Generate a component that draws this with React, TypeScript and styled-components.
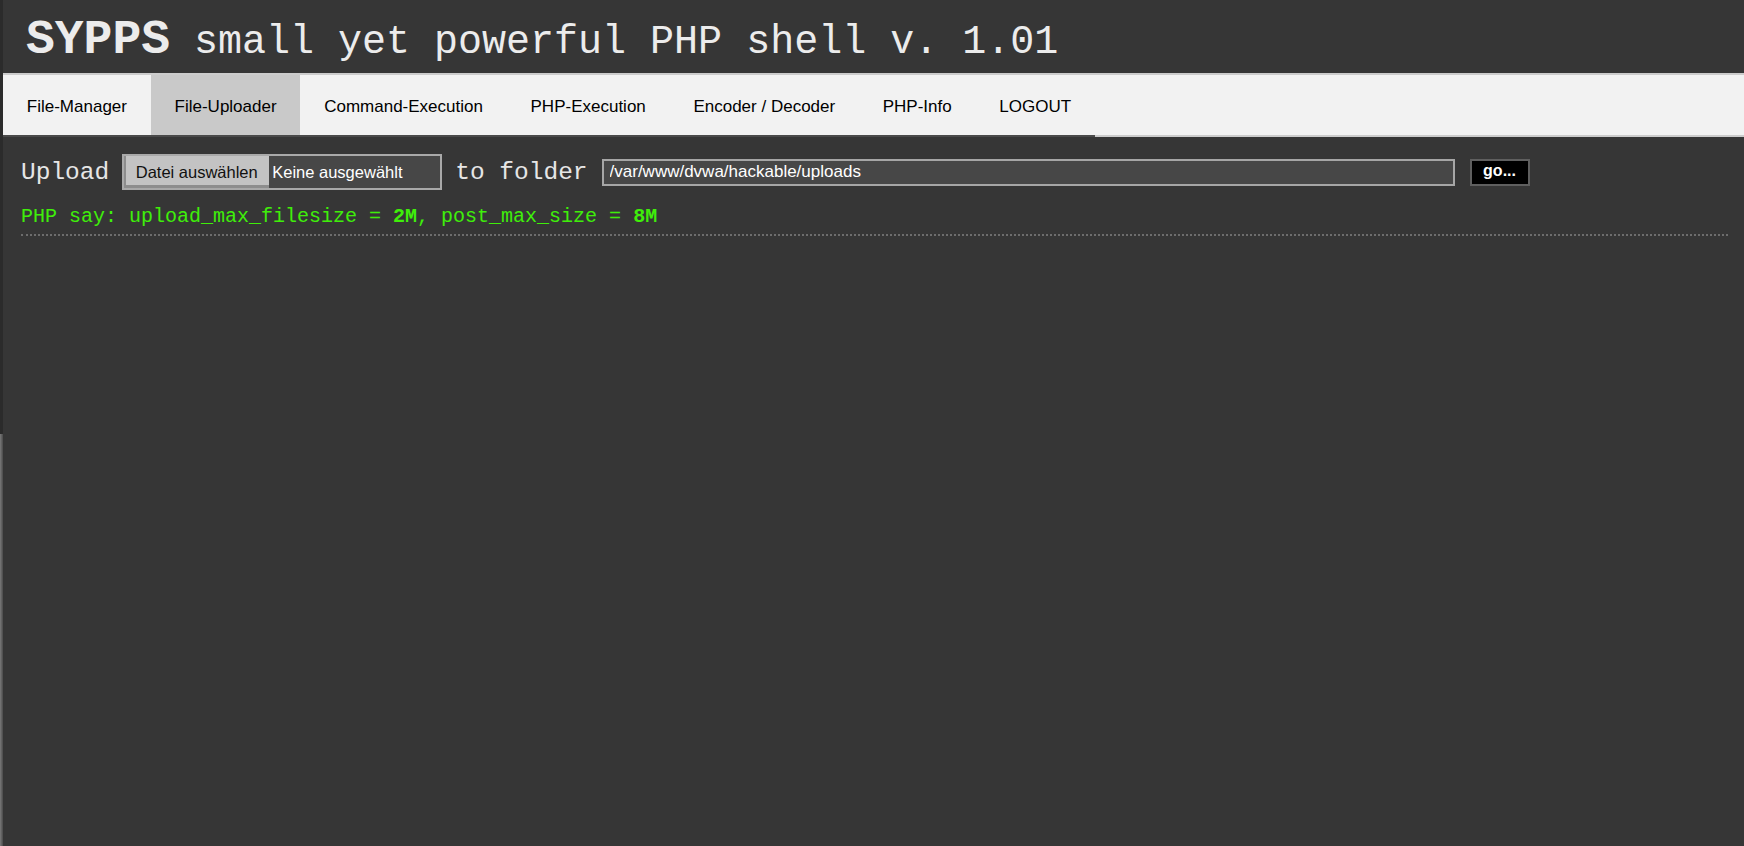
import React from "react";
import styled, { createGlobalStyle } from "styled-components";

const GlobalStyle = createGlobalStyle`
  html, body {
    margin: 0;
    padding: 0;
  }
  body {
    min-height: 846px;
    padding-left: 3px;
    background:
      linear-gradient(#2b2b2b, #2b2b2b) 0 0 / 3px 434px no-repeat,
      linear-gradient(to right, #7a7a7a, #4a4a4a) 0 434px / 3px 100% no-repeat,
      #363636;
    font-family: "Liberation Sans", Arial, sans-serif;
  }
`;

const Header = styled.header`
  height: 73px;
  display: flex;
  align-items: flex-start;
  padding-left: 23px;
  background: #363636;
`;

const Title = styled.h1`
  margin: 0;
  padding-top: 5px;
  line-height: 70px;
  font-family: "Liberation Mono", "Courier New", monospace;
  font-weight: normal;
  color: #ececec;
  white-space: pre;
`;

const Brand = styled.b`
  font-size: 48px;
  font-weight: bold;
`;

const Subtitle = styled.span`
  font-size: 40px;
`;

const Nav = styled.nav`
  display: flex;
  height: 60px;
  background: #f2f2f2;
  border-top: 2px solid #cccccc;
  border-bottom: 2px solid #cccccc;
`;

const Tabs = styled.ul`
  display: flex;
  margin: 0 0 -2px 0;
  padding: 0;
  list-style: none;
  border-bottom: 2px solid #4a4a4a;
`;

const Tab = styled.li<{ $active?: boolean }>`
  padding: 3px 23.8px 0 23.8px;
  line-height: 57px;
  font-size: 17px;
  color: #000;
  background: ${(p) => (p.$active ? "#c9c9c9" : "#f2f2f2")};
  cursor: pointer;
`;

const Content = styled.main`
  padding: 17px 16px 0 18px;
`;

const UploadRow = styled.form`
  display: flex;
  align-items: center;
  margin: 0;
`;

const Label = styled.span<{ $gap: number }>`
  font-family: "Liberation Mono", "Courier New", monospace;
  font-size: 24.5px;
  color: #e6e6e6;
  margin-right: ${(p) => p.$gap}px;
  white-space: pre;
`;

const FileBox = styled.label`
  display: flex;
  box-sizing: border-box;
  width: 320px;
  height: 36px;
  border: 2px solid #a9a9a9;
  background: #474747;
  margin-right: 13px;
`;

const FileButton = styled.span`
  display: flex;
  align-items: center;
  justify-content: center;
  width: 145px;
  background: #c3c3c3;
  color: #111;
  font-size: 16.5px;
  box-shadow: inset 2px -3px 0 #8d8d8d;
`;

const FileName = styled.span`
  display: flex;
  align-items: center;
  flex: 1;
  padding-left: 3px;
  color: #ffffff;
  font-size: 16.5px;
`;

const FolderInput = styled.input`
  box-sizing: border-box;
  width: 853px;
  height: 27px;
  margin: 0 15px 0 0;
  padding: 0 6px;
  border: 2px solid #a6a6a6;
  background: #474747;
  color: #ffffff;
  font-family: "Liberation Sans", Arial, sans-serif;
  font-size: 17px;
  outline: none;
`;

const GoButton = styled.button`
  box-sizing: border-box;
  width: 60px;
  height: 27px;
  padding: 0 0 2px 0;
  border: 2px solid #5f5f5f;
  background: #000;
  color: #fff;
  font-family: "Liberation Sans", Arial, sans-serif;
  font-weight: bold;
  font-size: 16px;
`;

const Notice = styled.p`
  margin: 15px 0 0 0;
  padding-bottom: 5px;
  border-bottom: 2px dotted #6d6d6d;
  font-family: "Liberation Mono", "Courier New", monospace;
  font-size: 20px;
  line-height: 24px;
  color: #3fee0a;
  white-space: pre;
`;

const tabs = [
  "File-Manager",
  "File-Uploader",
  "Command-Execution",
  "PHP-Execution",
  "Encoder / Decoder",
  "PHP-Info",
  "LOGOUT",
];

export default function App() {
  return (
    <>
      <GlobalStyle />
      <Header>
        <Title>
          <Brand>SYPPS</Brand>
          <Subtitle> small yet powerful PHP shell v. 1.01</Subtitle>
        </Title>
      </Header>
      <Nav>
        <Tabs>
          {tabs.map((t) => (
            <Tab key={t} $active={t === "File-Uploader"}>
              {t}
            </Tab>
          ))}
        </Tabs>
      </Nav>
      <Content>
        <UploadRow onSubmit={(e) => e.preventDefault()}>
          <Label $gap={13}>Upload</Label>
          <FileBox>
            <FileButton>Datei auswählen</FileButton>
            <FileName>Keine ausgewählt</FileName>
          </FileBox>
          <Label $gap={14}>to folder</Label>
          <FolderInput type="text" defaultValue="/var/www/dvwa/hackable/uploads" />
          <GoButton type="submit">go...</GoButton>
        </UploadRow>
        <Notice>
          PHP say: upload_max_filesize = <b>2M</b>, post_max_size = <b>8M</b>
        </Notice>
      </Content>
    </>
  );
}
